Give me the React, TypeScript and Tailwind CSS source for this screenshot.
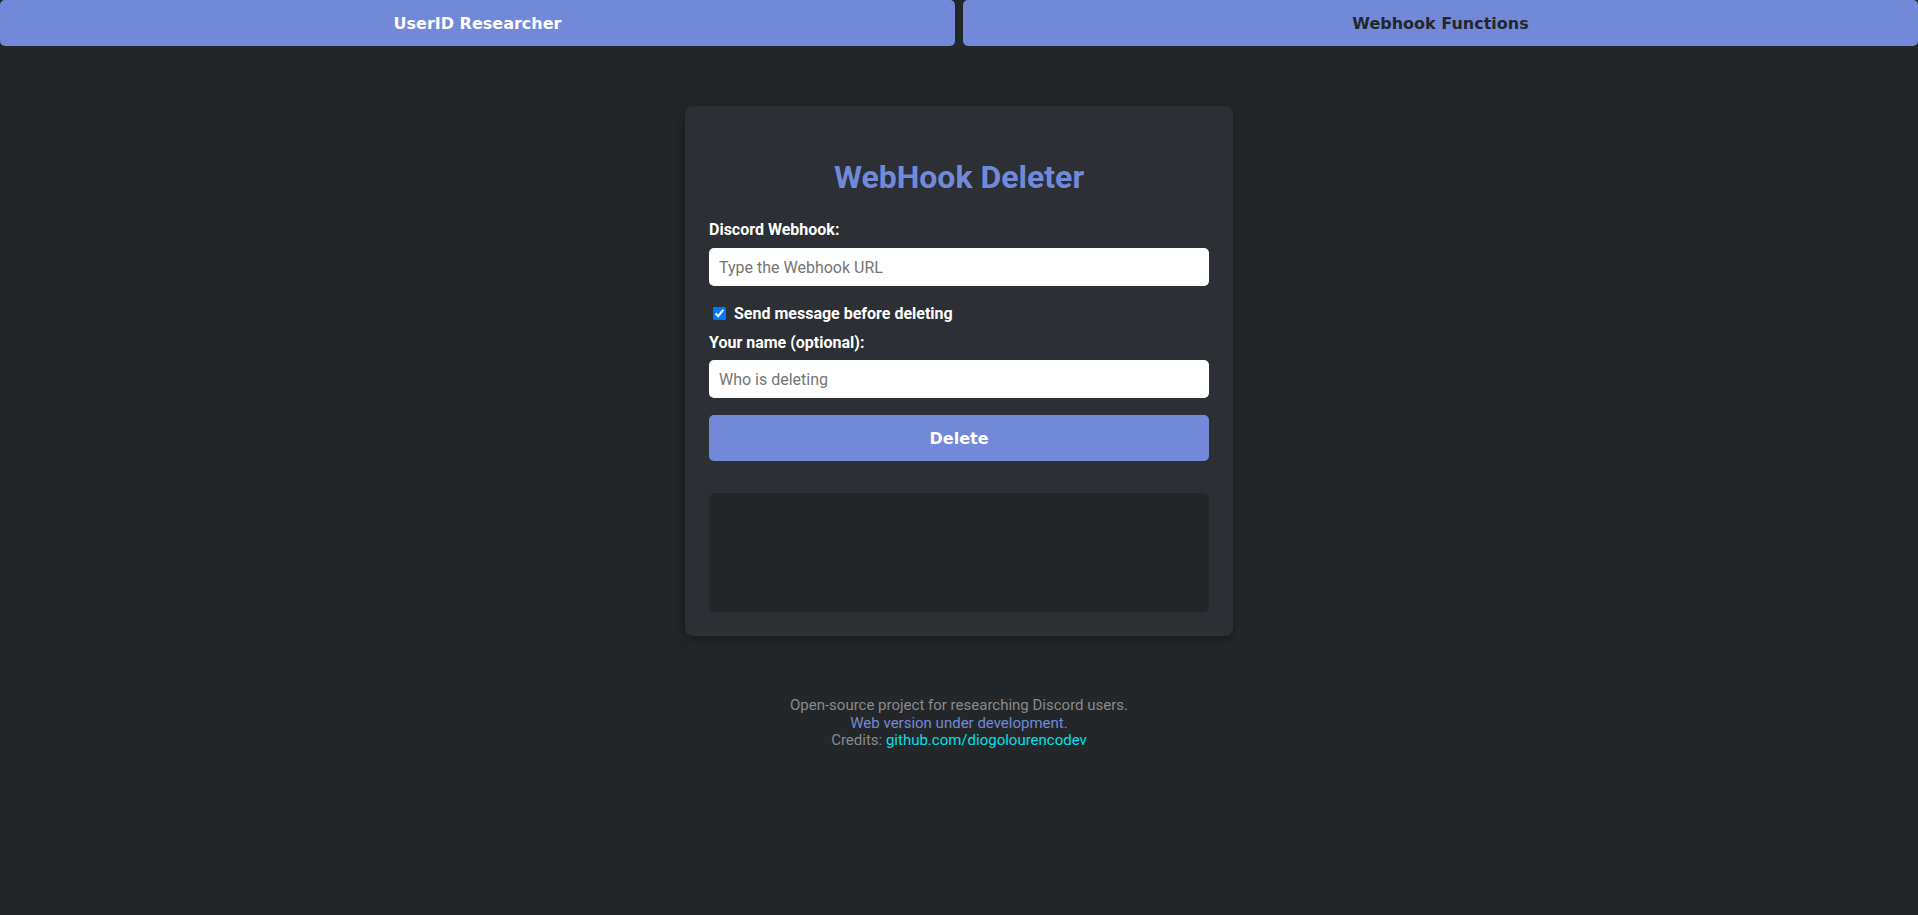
import React, { useState } from 'react';

const App: React.FC = () => {
    const [tab, setTab] = useState<'user' | 'webhook'>('user');
    const [url, setUrl] = useState('');
    const [name, setName] = useState('');
    const [sendMsg, setSendMsg] = useState(true);

    const navBtn = 'flex-1 h-[46px] pt-[2px] rounded-[5px] bg-[#7289da] text-[16px] font-bold font-["DejaVu_Sans",sans-serif]';

    return (
        <div className="min-h-screen bg-[#23272a] font-['Roboto',sans-serif] text-white">
            <nav className="flex gap-2">
                <button onClick={() => setTab('user')} className={`${navBtn} text-white`}>
                    UserID Researcher
                </button>
                <button onClick={() => setTab('webhook')} className={`${navBtn} text-[#23272a]`}>
                    Webhook Functions
                </button>
            </nav>

            <div className="mx-auto mt-[60px] w-[548px] rounded-[8px] bg-[#2c2f33] p-6 shadow-[0_4px_14px_rgba(0,0,0,0.35)]">
                <h2 className="mt-[28px] text-center text-[32px] leading-[38px] font-bold text-[#7289da]">
                    WebHook Deleter
                </h2>

                <label htmlFor="webhook" className="mt-[24px] block text-[16px] leading-[19px] font-bold">
                    Discord Webhook:
                </label>
                <input
                    id="webhook"
                    type="text"
                    value={url}
                    onChange={(e) => setUrl(e.target.value)}
                    placeholder="Type the Webhook URL"
                    className="mt-[9px] block h-[38px] w-full rounded-[5px] bg-white px-[10px] text-[16px] text-[#222] placeholder-[#757575] outline-none"
                />

                <label className="mt-[18px] flex h-[19px] items-center text-[16px] font-bold">
                    <input
                        type="checkbox"
                        checked={sendMsg}
                        onChange={(e) => setSendMsg(e.target.checked)}
                        className="ml-[4px] mr-[8px] h-[13px] w-[13px] accent-[#0075ff]"
                    />
                    Send message before deleting
                </label>

                <label htmlFor="author" className="mt-[10px] block text-[16px] leading-[19px] font-bold">
                    Your name (optional):
                </label>
                <input
                    id="author"
                    type="text"
                    value={name}
                    onChange={(e) => setName(e.target.value)}
                    placeholder="Who is deleting"
                    className="mt-[8px] block h-[38px] w-full rounded-[5px] bg-white px-[10px] text-[16px] text-[#222] placeholder-[#757575] outline-none"
                />

                <button className="mt-[17px] block h-[46px] w-full rounded-[5px] bg-[#7289da] pt-[2px] text-[16px] font-bold text-white font-['DejaVu_Sans',sans-serif]">
                    Delete
                </button>

                <div className="mt-[32px] h-[119px] rounded-[6px] bg-[#23272a]"></div>
            </div>

            <footer className="mt-[61px] text-center text-[15px] leading-[17.5px] text-[#8a8a8a]">
                <p>Open-source project for researching Discord users.</p>
                <p className="text-[#7289da]">Web version under development.</p>
                <p>
                    Credits: <a href="#" className="text-[#00e0e6]">github.com/diogolourencodev</a>
                </p>
            </footer>
        </div>
    );
};

export default App;
